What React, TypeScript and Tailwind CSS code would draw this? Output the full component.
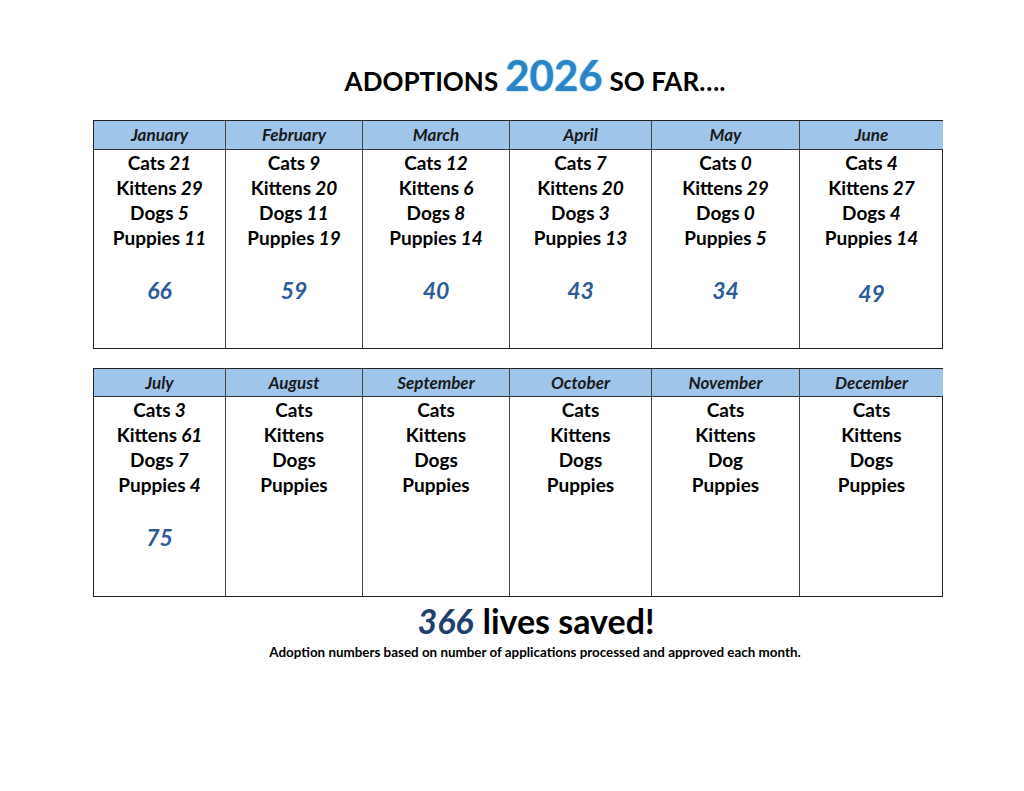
type Month = {
  name: string
  rows: [string, string][]
  total?: string
  totalClass?: string
}

const firstHalf: Month[] = [
  { name: "January", rows: [["Cats", "21"], ["Kittens", "29"], ["Dogs", "5"], ["Puppies", "11"]], total: "66" },
  { name: "February", rows: [["Cats", "9"], ["Kittens", "20"], ["Dogs", "11"], ["Puppies", "19"]], total: "59" },
  { name: "March", rows: [["Cats", "12"], ["Kittens", "6"], ["Dogs", "8"], ["Puppies", "14"]], total: "40" },
  { name: "April", rows: [["Cats", "7"], ["Kittens", "20"], ["Dogs", "3"], ["Puppies", "13"]], total: "43" },
  { name: "May", rows: [["Cats", "0"], ["Kittens", "29"], ["Dogs", "0"], ["Puppies", "5"]], total: "34" },
  { name: "June", rows: [["Cats", "4"], ["Kittens", "27"], ["Dogs", "4"], ["Puppies", "14"]], total: "49", totalClass: "mt-[29px]" },
]

const secondHalf: Month[] = [
  { name: "July", rows: [["Cats", "3"], ["Kittens", "61"], ["Dogs", "7"], ["Puppies", "4"]], total: "75" },
  { name: "August", rows: [["Cats", ""], ["Kittens", ""], ["Dogs", ""], ["Puppies", ""]] },
  { name: "September", rows: [["Cats", ""], ["Kittens", ""], ["Dogs", ""], ["Puppies", ""]] },
  { name: "October", rows: [["Cats", ""], ["Kittens", ""], ["Dogs", ""], ["Puppies", ""]] },
  { name: "November", rows: [["Cats", ""], ["Kittens", ""], ["Dog", ""], ["Puppies", ""]] },
  { name: "December", rows: [["Cats", ""], ["Kittens", ""], ["Dogs", ""], ["Puppies", ""]] },
]

function MonthTable({ months, headerH, bodyH }: { months: Month[]; headerH: string; bodyH: string }) {
  return (
    <div className="grid grid-cols-[131px_137px_147px_142px_148px_144px] border border-[#222]">
      {months.map((m, i) => (
        <div
          key={m.name}
          className={`flex flex-col ${i > 0 ? "border-l border-[#444]" : ""}`}
        >
          <div
            className={`${headerH} flex items-center justify-center bg-[#9fc5ea] border-b border-[#333] text-[17px] font-bold italic text-[#1a1a1a]`}
          >
            {m.name}
          </div>
          <div className={`${bodyH} flex flex-col items-center text-[19px] font-bold leading-[25px] text-black`}>
            {m.rows.map(([label, n]) => (
              <div key={label}>
                {label}
                {n && <span className="italic"> {n}</span>}
              </div>
            ))}
            {m.total && (
              <div className={`${m.totalClass ?? "mt-[26px]"} text-[23px] leading-[28px] font-bold italic text-[#2d5c99]`}>
                {m.total}
              </div>
            )}
          </div>
        </div>
      ))}
    </div>
  )
}

export default function App() {
  return (
    <div className="w-[1024px] h-[791px] bg-white font-['Lato','Open_Sans',sans-serif] text-black">
      <div className="pt-[54px] pl-[46px] flex items-baseline justify-center">
        <span className="text-[26px] font-bold">ADOPTIONS</span>
        <span
          className="mx-[7px] text-[42px] font-bold text-[#2a84c6] leading-none"
          style={{ textShadow: "0 0 2px #9fd0f2, 0 0 1px #7fbfe8" }}
        >
          2026
        </span>
        <span className="text-[26px] font-bold">SO FAR….</span>
      </div>
      <div className="pl-[93px] mt-[19px]">
        <div className="w-[850px]">
          <MonthTable months={firstHalf} headerH="h-[29px]" bodyH="h-[198px]" />
          <div className="mt-[19px]">
            <MonthTable months={secondHalf} headerH="h-[28px]" bodyH="h-[199px]" />
          </div>
        </div>
      </div>
      <div className="pl-[48px] mt-[1px] flex items-baseline justify-center text-[34px] font-bold leading-[46px]">
        <span className="italic text-[#1f3f6e]">366</span>
        <span className="ml-[9px]">lives saved!</span>
      </div>
      <p className="pl-[46px] text-center text-[13.4px] font-bold leading-[16px]">
        Adoption numbers based on number of applications processed and approved each month.
      </p>
    </div>
  )
}
